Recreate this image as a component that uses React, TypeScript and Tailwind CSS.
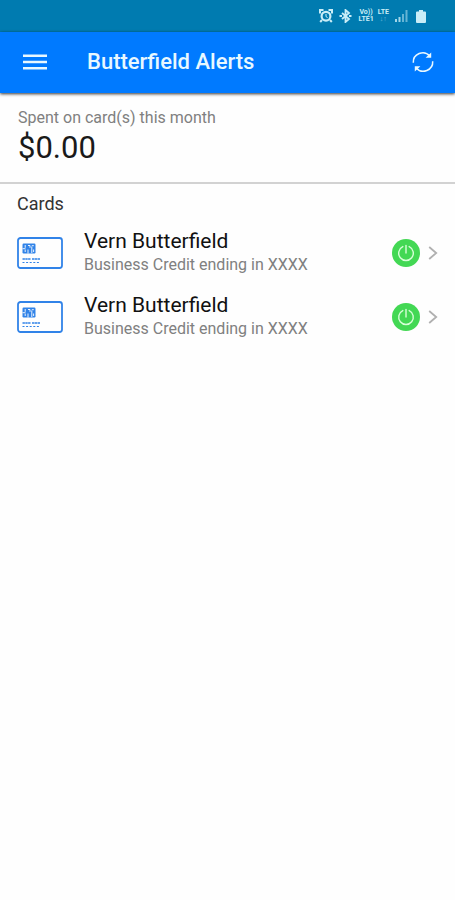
interface Card {
  id: number;
  holder: string;
  description: string;
}

const cards: Card[] = [
  { id: 1, holder: "Vern Butterfield", description: "Business Credit ending in XXXX" },
  { id: 2, holder: "Vern Butterfield", description: "Business Credit ending in XXXX" },
];

function AlarmIcon() {
  return (
    <svg width="14" height="14" viewBox="0 0 14 14" fill="none" stroke="currentColor" aria-hidden="true">
      <path d="M1 4.5V1h3.5M9.5 1H13v3.5M3 11l-1.8 2M11 11l1.8 2" strokeWidth="2" />
      <circle cx="7" cy="7.2" r="4.4" strokeWidth="2.2" />
      <path d="M7 5v2.6l1.6 1" strokeWidth="1" />
    </svg>
  );
}

function BluetoothIcon() {
  return (
    <svg width="13" height="14" viewBox="0 0 13 14" fill="none" stroke="currentColor" aria-hidden="true">
      <path d="M3 4l7 6-3.5 3V1L10 4l-7 6" strokeWidth="1.8" />
      <path d="M.5 7H3M10 7h2.5" strokeWidth="2" />
    </svg>
  );
}

function SignalIcon() {
  return (
    <svg width="13" height="12" viewBox="0 0 13 12" fill="currentColor" aria-hidden="true">
      <path d="M0 9h2v3H0zM3.5 7h2v5h-2z" opacity=".8" />
      <path d="M7 4h2v8H7zM10.5 0h2v12h-2z" opacity=".5" />
    </svg>
  );
}

function BatteryIcon() {
  return (
    <svg width="10" height="13" viewBox="0 0 10 13" fill="currentColor" aria-hidden="true">
      <path d="M3 0h4v1.5h2q1 0 1 1V12q0 1-1 1H1q-1 0-1-1V2.5q0-1 1-1h2z" />
    </svg>
  );
}

function MenuIcon() {
  return (
    <svg width="24" height="16" viewBox="0 0 24 16" fill="currentColor" aria-hidden="true">
      <path d="M0 .5h24v2.6H0zM0 6.7h24v2.6H0zM0 12.9h24v2.6H0z" />
    </svg>
  );
}

function RefreshIcon() {
  return (
    <svg width="24" height="24" viewBox="0 0 24 24" fill="none" stroke="currentColor" strokeWidth="1.5" aria-hidden="true">
      <path d="M2.3 12.8A9.4 9.4 0 0 1 18.8 6.1" />
      <path d="M21.7 11.2A9.4 9.4 0 0 1 5.2 17.9" />
      <path d="M20.2 2.4v5.3h-5.6zM3.8 21.6v-5.3h5.6z" fill="currentColor" stroke="none" />
    </svg>
  );
}

function CardIcon() {
  return (
    <svg width="46" height="32" viewBox="0 0 46 32" fill="none" stroke="#3183e8" className="shrink-0" aria-hidden="true">
      <rect x="1" y="1" width="44" height="30" rx="2.5" strokeWidth="1.8" />
      <rect x="5.5" y="6.5" width="13" height="10" rx="1.2" fill="#3183e8" stroke="none" />
      <path d="M8.2 8v2.8M8.2 12.6V15M5.5 11.7h3M11 8.5h2v2.3M11 12.5V16.5M14.8 9.5v6.5M16.6 12.5V15M14.8 8.7h2" stroke="#fff" strokeWidth=".9" />
      <path d="M5.5 22h8M15 22h8" strokeWidth="1.6" strokeDasharray="2.4 .4" />
      <path d="M5.5 25.5h18" strokeWidth="1.2" strokeDasharray="2 1.6" />
    </svg>
  );
}

function PowerIcon() {
  return (
    <svg width="18" height="18" viewBox="0 0 18 18" fill="none" stroke="currentColor" strokeWidth="1.4" strokeLinecap="round" aria-hidden="true">
      <path d="M5.8 2.6a7.3 7.3 0 1 0 6.4 0" />
      <path d="M9 1.5V9" />
    </svg>
  );
}

function ChevronIcon() {
  return (
    <svg width="10" height="14" viewBox="0 0 10 14" fill="none" stroke="#b0b0b0" strokeWidth="1.8" aria-hidden="true">
      <path d="M1.2 1l7 6-7 6" />
    </svg>
  );
}

function StatusBar() {
  return (
    <div className="flex h-8 items-center justify-end gap-1.5 bg-[#007bb0] pr-[29px] text-[#c9edf7]">
      <AlarmIcon />
      <BluetoothIcon />
      <div className="flex gap-1 text-center text-[7px] leading-[7px] font-bold">
        <div>
          <div>Vo))</div>
          <div>LTE1</div>
        </div>
        <div>
          <div>LTE</div>
          <div className="opacity-50">↓↑</div>
        </div>
      </div>
      <SignalIcon />
      <div className="ml-0.5">
        <BatteryIcon />
      </div>
    </div>
  );
}

function CardRow({ card }: { card: Card }) {
  return (
    <li className="flex h-16 items-center px-[17px]">
      <CardIcon />
      <div className="ml-[21px] flex-1">
        <div className="text-[21px] leading-6 text-[#111]">{card.holder}</div>
        <div className="text-base leading-6 text-[#808080]">{card.description}</div>
      </div>
      <button
        type="button"
        aria-label="Turn card off"
        className="flex size-7 items-center justify-center rounded-full bg-[#43d854] text-[#d8ffd8]"
      >
        <PowerIcon />
      </button>
      <button type="button" aria-label="Card details" className="ml-2">
        <ChevronIcon />
      </button>
    </li>
  );
}

export default function App() {
  return (
    <div className="min-h-screen bg-[#fefefe] font-[Roboto,sans-serif]">
      <StatusBar />
      <header className="flex h-[61px] items-center bg-[#007aff] pr-5 pb-0.5 pl-[23px] text-[#e8f8ff] shadow-[0_1px_3px_rgba(0,0,0,0.8)]">
        <button type="button" aria-label="Menu">
          <MenuIcon />
        </button>
        <h1 className="ml-10 flex-1 text-[22px] leading-6 font-medium">Butterfield Alerts</h1>
        <button type="button" aria-label="Refresh">
          <RefreshIcon />
        </button>
      </header>

      <main>
        <section className="border-b-2 border-[#d2d2d2] px-[18px] pt-[13px] pb-4">
          <p className="text-base leading-6 text-[#808080]">Spent on card(s) this month</p>
          <p className="text-[31px] leading-9 text-[#1a1a1a]">$0.00</p>
        </section>

        <section>
          <h2 className="px-[17px] pt-2 pb-[5px] text-lg leading-6 text-[#333]">Cards</h2>
          <ul>
            {cards.map((card) => (
              <CardRow key={card.id} card={card} />
            ))}
          </ul>
        </section>
      </main>
    </div>
  );
}
